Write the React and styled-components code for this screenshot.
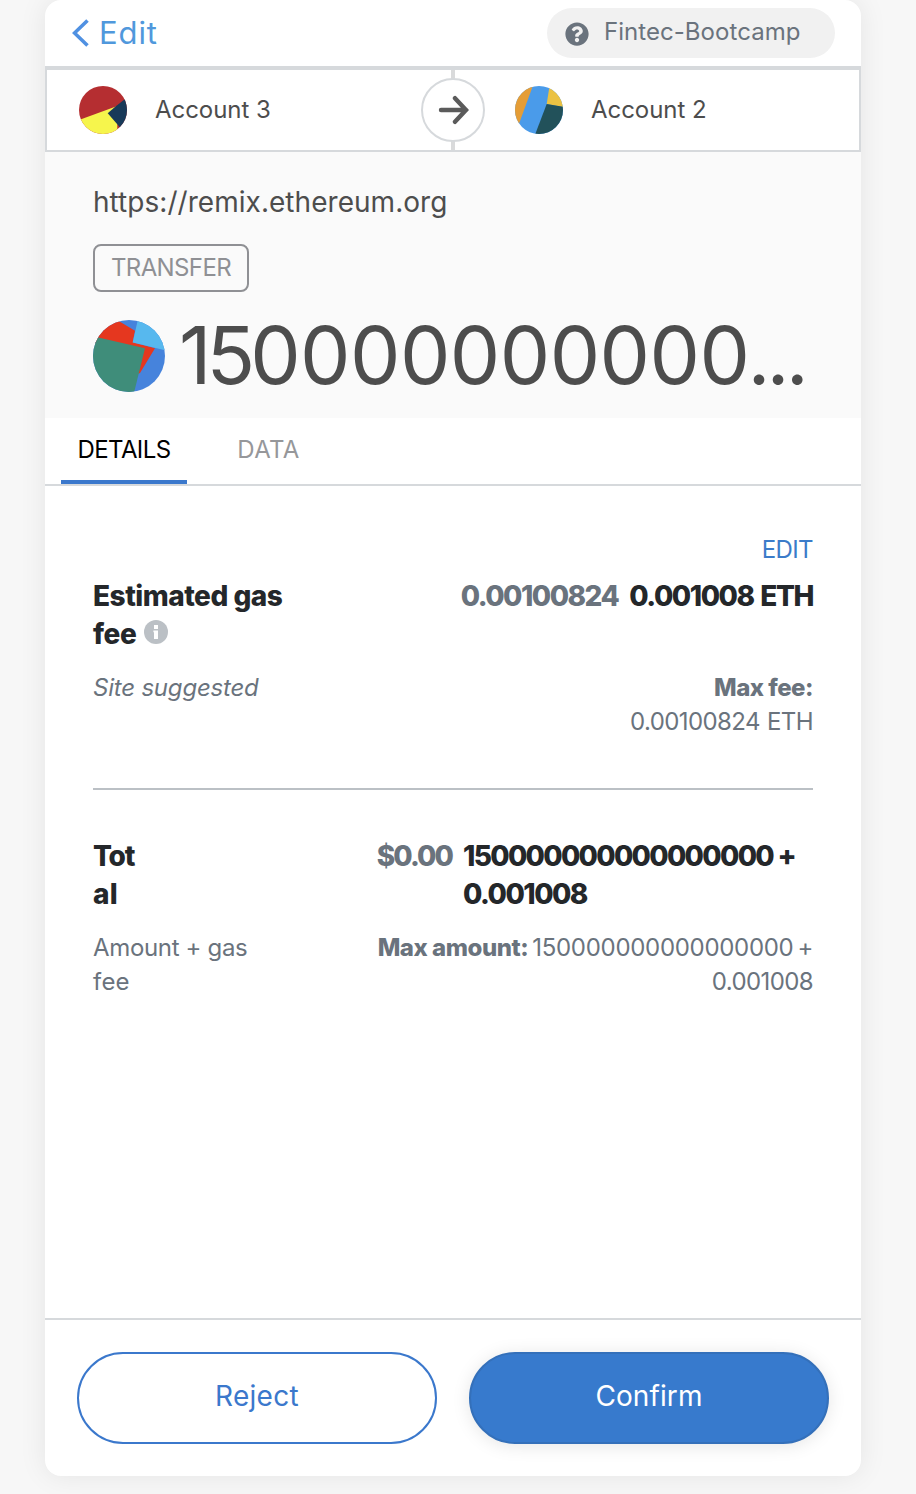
import React from 'react';
import styled, { createGlobalStyle, css } from 'styled-components';
import { FaQuestionCircle } from 'react-icons/fa';

const GlobalStyle = createGlobalStyle`
  * { box-sizing: border-box; }
  body {
    margin: 0;
    background: #f7f7f7;
    font-family: Inter, "Liberation Sans", sans-serif;
  }
`;

const Page = styled.div`
  width: 916px;
  height: 1494px;
  padding: 0 55px 18px 45px;
  overflow: hidden;
`;

const Card = styled.main`
  display: flex;
  flex-direction: column;
  height: 1476px;
  background: #fff;
  border-radius: 16px;
  box-shadow: 0 0 28px rgba(0, 0, 0, 0.08);
  overflow: hidden;
`;

const Track = styled.span`
  white-space: pre;
  letter-spacing: ${({ $by }) => $by}px;
  word-spacing: ${({ $word = 0 }) => $word}px;
`;

const Header = styled.header`
  display: flex;
  justify-content: space-between;
  align-items: flex-start;
  height: 68px;
  padding: 8px 26px 0 27px;
  border-bottom: 2px solid #d6d9dc;
`;

const BackLink = styled.a`
  display: flex;
  align-items: center;
  gap: 9px;
  height: 50px;
  color: #5098dc;
  font-size: 31px;

  span {
    padding-bottom: 2px;
  }
`;

const NetworkChip = styled.div`
  display: flex;
  align-items: center;
  width: 288px;
  height: 50px;
  padding: 0 0 3px 18px;
  border-radius: 25px;
  background: #f1f1f1;
  color: #6a737d;
  font-size: 24px;

  svg {
    margin: 5px 15px 0 0;
  }
`;

const Accounts = styled.section`
  position: relative;
  display: grid;
  grid-template-columns: 436px 1fr;
  height: 84px;
  border: 2px solid #d6d9dc;
`;

const Account = styled.div`
  display: flex;
  align-items: center;
  gap: 28px;
  padding-left: 32px;
  color: #4d4d4d;
  font-size: 24px;

  span {
    padding-bottom: 2px;
  }
`;

const Connector = styled.div`
  position: absolute;
  top: 0;
  left: 404px;
  width: 4px;
  height: 80px;
  background: #d9dadb;
`;

const ArrowBadge = styled.div`
  position: absolute;
  top: 8px;
  left: 374px;
  display: grid;
  place-items: center;
  width: 64px;
  height: 64px;
  border: 2px solid #d6d9dc;
  border-radius: 50%;
  background: #fff;
`;

const Summary = styled.section`
  height: 266px;
  padding: 31px 48px 0;
  background: #fafafa;
  color: #4d4d4d;
`;

const Origin = styled.div`
  font-size: 28px;
  line-height: 38px;
`;

const ActionTag = styled.div`
  display: flex;
  align-items: center;
  justify-content: center;
  width: 156px;
  height: 48px;
  margin-top: 23px;
  padding-bottom: 2px;
  border: 2px solid #8f9094;
  border-radius: 8px;
  color: #8f9094;
  font-size: 24px;
`;

const AmountRow = styled.div`
  display: flex;
  align-items: center;
  height: 72px;
  margin-top: 28px;
`;

const Amount = styled.div`
  display: flex;
  margin-left: 14px;
  padding-bottom: 2px;
  font-size: 80px;
  line-height: 72px;
`;

const Ellipsis = styled(Track)`
  margin-left: -2px;
`;

const Tabs = styled.nav`
  display: flex;
  height: 68px;
  padding-left: 16px;
  border-bottom: 2px solid #d6d9dc;
`;

const Tab = styled.div`
  display: flex;
  justify-content: center;
  width: ${({ $width }) => $width}px;
  height: 66px;
  margin-right: 34px;
  padding-top: 13px;
  font-size: 24px;
  line-height: 38px;
  color: #96979a;
  ${({ $active }) =>
    $active &&
    css`
      color: #000;
      border-bottom: 4px solid #3b78cc;
    `}
`;

const Details = styled.section`
  flex: 1;
  padding: 47px 48px 0;
`;

const EditFee = styled.div`
  height: 34px;
  margin-bottom: 10px;
  text-align: right;
  color: #3b7bc9;
  font-size: 24px;
  line-height: 34px;
`;

const Line = styled.div`
  display: flex;
  justify-content: space-between;
`;

const HeadLine = styled(Line)`
  height: 76px;
  font-size: 28px;
  font-weight: 800;
  line-height: 38px;
  color: #24272a;
`;

const SubLine = styled(Line)`
  height: 68px;
  margin-top: 18px;
  font-size: 24px;
  line-height: 34px;
  color: #6a737d;
`;

const Label = styled.div`
  font-style: ${({ $italic }) => ($italic ? 'italic' : 'normal')};

  svg {
    margin-left: 8px;
    vertical-align: 0;
  }
`;

const Values = styled.div`
  display: flex;
  gap: 11px;
`;

const Muted = styled.span`
  color: #6a737d;
`;

const TotalValue = styled.div`
  width: 350px;
`;

const Limit = styled.div`
  text-align: right;

  b {
    font-weight: 800;
  }
`;

const Divider = styled.hr`
  height: 2px;
  margin: 49px 0 47px;
  border: 0;
  background: #bbc0c5;
`;

const Footer = styled.footer`
  display: grid;
  grid-template-columns: 1fr 1fr;
  gap: 32px;
  height: 158px;
  padding: 32px;
  border-top: 2px solid #d6d9dc;
`;

const Button = styled.button`
  height: 92px;
  padding: 0 0 4px;
  border: 2px solid #3b78cc;
  border-radius: 46px;
  background: #fff;
  color: #3b78cc;
  font: 400 28px Inter, "Liberation Sans", sans-serif;
  ${({ $primary }) =>
    $primary &&
    css`
      border-color: #3470ba;
      background: #377acd;
      color: #fff;
      box-shadow: 0 2px 18px rgba(0, 0, 0, 0.1);
    `}
`;

const SenderAvatar = () => (
  <svg width="48" height="48" viewBox="0 0 48 48">
    <clipPath id="sender"><circle cx="24" cy="24" r="24" /></clipPath>
    <g clipPath="url(#sender)">
      <path fill="#b52e31" d="M0 0H48V48H0z" />
      <path fill="#f6f54c" d="M0 34 38.3 20V48H0z" />
      <path fill="#183a59" d="M48 11.5 36.5 20.5 28.7 27.3 42 42.4 48 48z" />
    </g>
  </svg>
);

const RecipientAvatar = () => (
  <svg width="48" height="48" viewBox="0 0 48 48">
    <clipPath id="recipient"><circle cx="24" cy="24" r="24" /></clipPath>
    <g clipPath="url(#recipient)">
      <path fill="#4a9bea" d="M0 0H48V48H0z" />
      <path fill="#e59d36" d="M0 0H17.8L2.8 41 0 48z" />
      <path fill="#ebc243" d="M34.5 0H48V21L31.7 18z" />
      <path fill="#22515a" d="M31.7 18 48 20.7V48H20.3z" />
    </g>
  </svg>
);

const TokenAvatar = () => (
  <svg width="72" height="72" viewBox="0 0 72 72">
    <clipPath id="token"><circle cx="36" cy="36" r="36" /></clipPath>
    <g clipPath="url(#token)">
      <path fill="#4683dc" d="M0 0H72V72H0z" />
      <path fill="#e5371f" d="M0 0H24L42 10.7 39.7 22.3 62 28.3 47 53 30 60 0 20z" />
      <path fill="#57b8ee" d="M44.8 0H72V30.3L39.7 22.5z" />
      <path fill="#3f8d7a" d="M0 16.2 52 28.3 41.2 72H0z" />
    </g>
  </svg>
);

const InfoIcon = () => (
  <svg width="24" height="24" viewBox="0 0 24 24">
    <circle cx="12" cy="12" r="12" fill="#bbc0c5" />
    <path fill="#fff" d="M10 5h4v4h-4zM9.4 10.4H14V19h-4v-6.8h-.6z" />
  </svg>
);

export default function App() {
  return (
    <>
      <GlobalStyle />
      <Page>
        <Card>
          <Header>
            <BackLink>
              <svg width="18" height="30" viewBox="0 0 18 30" fill="none" stroke="#5091e2" strokeWidth="3.6">
                <path d="M15.5 2.5 2.5 15 15.5 27.5" />
              </svg>
              <Track $by={0.9}>Edit</Track>
            </BackLink>
            <NetworkChip>
              <FaQuestionCircle size={24} />
              <Track $by={0.05}>Fintec-Bootcamp</Track>
            </NetworkChip>
          </Header>

          <Accounts>
            <Account>
              <SenderAvatar />
              <Track $by={-0.05}>Account 3</Track>
            </Account>
            <Account>
              <RecipientAvatar />
              <Track $by={-0.05}>Account 2</Track>
            </Account>
            <Connector />
            <ArrowBadge>
              <svg width="32" height="32" viewBox="0 0 32 32" fill="none" stroke="#5b5b5b" strokeWidth="4.4" strokeLinecap="round">
                <path d="M4 16H29M18 4.2 29 16 18 27.8" />
              </svg>
            </ArrowBadge>
          </Accounts>

          <Summary>
            <Origin><Track $by={0.04}>https://remix.ethereum.org</Track></Origin>
            <ActionTag><Track $by={-0.6}>TRANSFER</Track></ActionTag>
            <AmountRow>
              <TokenAvatar />
              <Amount>
                <Track $by={-5}>15</Track>
                <Track $by={-0.55}>0000000000</Track>
                <Ellipsis $by={-3.8}>...</Ellipsis>
              </Amount>
            </AmountRow>
          </Summary>

          <Tabs>
            <Tab $active $width={126}><Track $by={-0.6}>DETAILS</Track></Tab>
            <Tab $width={95}><Track $by={0.35}>DATA</Track></Tab>
          </Tabs>

          <Details>
            <EditFee><Track $by={-0.6}>EDIT</Track></EditFee>
            <HeadLine>
              <Label>
                <Track $by={-0.5}>Estimated gas</Track>
                <br />
                <Track $by={-0.4}>fee</Track>
                <InfoIcon />
              </Label>
              <Values>
                <Muted><Track $by={-1.5}>0.00100824</Track></Muted>
                <Track $by={-1.45} $word={2}>0.001008 ETH</Track>
              </Values>
            </HeadLine>
            <SubLine>
              <Label $italic><Track $by={-0.2}>Site suggested</Track></Label>
              <Limit>
                <b><Track $by={-0.5}>Max fee:</Track></b>
                <br />
                <Track $by={-0.6} $word={1}>0.00100824 ETH</Track>
              </Limit>
            </SubLine>

            <Divider />

            <HeadLine>
              <Label>
                <Track $by={-1.2}>Tot</Track>
                <br />
                <Track $by={0.4}>al</Track>
              </Label>
              <Values>
                <Muted><Track $by={-1.9}>$0.00</Track></Muted>
                <TotalValue>
                  <Track $by={-1.7}>150000000000000000 +</Track>
                  <br />
                  <Track $by={-1.5}>0.001008</Track>
                </TotalValue>
              </Values>
            </HeadLine>
            <SubLine>
              <Label>
                <Track $by={-0.34}>Amount + gas</Track>
                <br />
                <Track $by={0.2}>fee</Track>
              </Label>
              <Limit>
                <b><Track $by={-0.45}>Max amount:</Track></b>
                <Track $by={-0.3} $word={-2.5}> 150000000000000000 +</Track>
                <br />
                <Track $by={-0.6}>0.001008</Track>
              </Limit>
            </SubLine>
          </Details>

          <Footer>
            <Button><Track $by={0.3}>Reject</Track></Button>
            <Button $primary><Track $by={0.1}>Confirm</Track></Button>
          </Footer>
        </Card>
      </Page>
    </>
  );
}
